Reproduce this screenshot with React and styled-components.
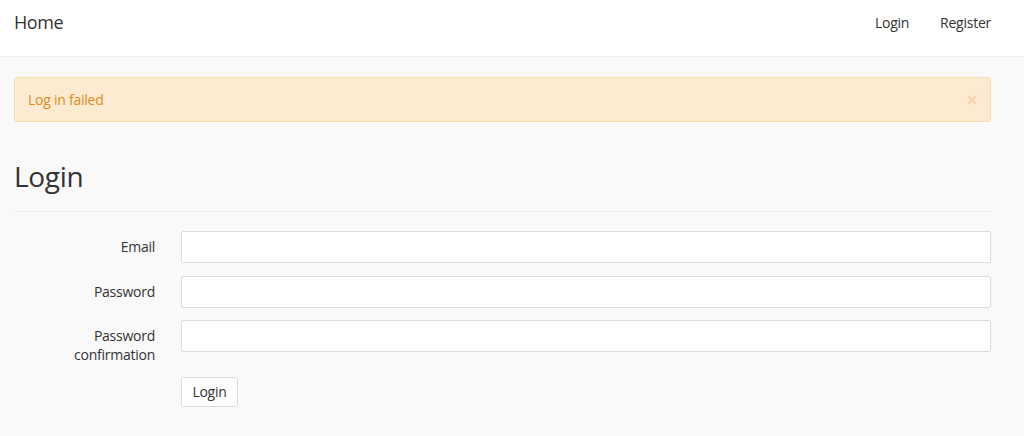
import React from "react";
import styled, { createGlobalStyle } from "styled-components";

const GlobalStyle = createGlobalStyle`
  html, body {
    margin: 0;
    padding: 0;
    background: #f9f9f9;
    font-family: "Open Sans", "Liberation Sans", sans-serif;
    color: #333;
    letter-spacing: -0.25px;
  }
  * { box-sizing: border-box; }
`;

const Navbar = styled.nav`
  height: 57px;
  background: #fff;
  border-bottom: 1px solid #f0f0f0;
  display: flex;
  align-items: center;
  justify-content: space-between;
  padding: 0 33px 0 14px;
`;

const Brand = styled.a`
  font-size: 18px;
  letter-spacing: -0.4px;
  color: #333;
  text-decoration: none;
  margin-top: -12px;
`;

const NavLinks = styled.div`
  display: flex;
  gap: 31px;
  margin-top: -12px;
`;

const NavLink = styled.a`
  font-size: 14px;
  color: #333;
  text-decoration: none;
`;

const Container = styled.main`
  padding: 20px 33px 0 14px;
`;

const Alert = styled.div`
  height: 45px;
  background: #fdebd1;
  border: 1px solid #fbdcae;
  border-radius: 3px;
  color: #dc8b24;
  font-size: 14px;
  display: flex;
  align-items: center;
  justify-content: space-between;
  padding: 0 12px 0 13px;
`;

const Close = styled.button`
  border: none;
  background: none;
  padding: 0;
  color: #f6cf9c;
  font-size: 20px;
  line-height: 1;
  font-family: "Open Sans", sans-serif;
  cursor: pointer;
`;

const Title = styled.h1`
  margin: 38px 0 0;
  font-size: 28px;
  font-weight: 400;
  line-height: 33px;
  letter-spacing: -0.3px;
  color: #333;
`;

const Rule = styled.hr`
  border: none;
  border-top: 1px solid #ececec;
  margin: 18px 0 19px;
`;

const Form = styled.form`
  display: grid;
  grid-template-columns: 141px 1fr;
  column-gap: 26px;
  row-gap: 12.5px;
  align-items: start;
`;

const Label = styled.label`
  text-align: right;
  font-size: 14px;
  line-height: 19px;
  padding-top: 6px;
  color: #333;
`;

const Input = styled.input`
  height: 32px;
  width: 100%;
  background: #fff;
  border: 1px solid #dcdcdc;
  border-radius: 2px;
  font-size: 14px;
  padding: 0 10px;
  font-family: inherit;
`;

const Button = styled.button`
  grid-column: 2;
  justify-self: start;
  height: 30px;
  width: 57px;
  background: #fff;
  border: 1px solid #dcdcdc;
  border-radius: 2px;
  font-size: 14px;
  font-family: inherit;
  letter-spacing: inherit;
  color: #333;
  padding: 0;
`;

const fields = [
  { id: "email", label: "Email", type: "email" },
  { id: "password", label: "Password", type: "password" },
  { id: "confirm", label: <>Password<br />confirmation</>, type: "password" },
];

export default function App() {
  return (
    <>
      <GlobalStyle />
      <Navbar>
        <Brand href="#">Home</Brand>
        <NavLinks>
          <NavLink href="#">Login</NavLink>
          <NavLink href="#">Register</NavLink>
        </NavLinks>
      </Navbar>
      <Container>
        <Alert>
          <span>Log in failed</span>
          <Close type="button">×</Close>
        </Alert>
        <Title>Login</Title>
        <Rule />
        <Form onSubmit={(e) => e.preventDefault()}>
          {fields.map((f) => (
            <React.Fragment key={f.id}>
              <Label htmlFor={f.id}>{f.label}</Label>
              <Input id={f.id} type={f.type} />
            </React.Fragment>
          ))}
          <Button type="submit">Login</Button>
        </Form>
      </Container>
    </>
  );
}
